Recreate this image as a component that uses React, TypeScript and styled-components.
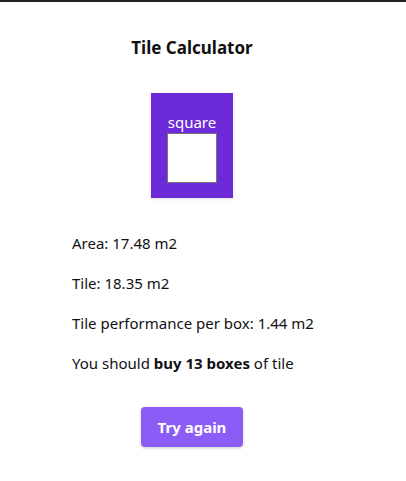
import React from "react";
import styled, { createGlobalStyle } from "styled-components";

const Global = createGlobalStyle`
  html, body { margin: 0; padding: 0; background: #fff; }
  body { font-family: "Segoe UI", "Noto Sans", "Open Sans", sans-serif; color: #111; }
`;

const Page = styled.div`
  border-top: 2px solid #222;
  min-height: 479px;
`;

const Content = styled.div`
  width: 384px;
  display: flex;
  flex-direction: column;
  align-items: center;
`;

const Title = styled.h1`
  margin: 35px 0 0;
  font-size: 17px;
  font-weight: 700;
  line-height: 22px;
`;

const Shape = styled.div`
  margin-top: 34px;
  width: 82px;
  height: 105px;
  background: #6d2ad8;
  display: flex;
  flex-direction: column;
  align-items: center;
  padding-top: 19px;
  box-sizing: border-box;
  box-shadow: 0 1px 3px rgba(0,0,0,0.12);
`;

const ShapeLabel = styled.div`
  color: #fff;
  font-size: 15px;
  line-height: 21px;
`;

const Square = styled.div`
  width: 50px;
  height: 50px;
  box-sizing: border-box;
  background: #fff;
  border: 1px solid #777;
`;

const Results = styled.div`
  align-self: stretch;
  padding: 35px 0 0 72px;
  display: flex;
  flex-direction: column;
  gap: 19px;
`;

const Line = styled.p`
  margin: 0;
  font-size: 15px;
  line-height: 21px;
`;

const Button = styled.button`
  margin-top: 33px;
  width: 102px;
  height: 40px;
  border: none;
  border-radius: 4px;
  background: #8b5cf6;
  color: #fff;
  font-family: inherit;
  font-size: 15px;
  font-weight: 700;
  box-shadow: 0 1px 3px rgba(0,0,0,0.2);
  cursor: pointer;
`;

export default function App() {
  return (
    <>
      <Global />
      <Page>
        <Content>
          <Title>Tile Calculator</Title>
          <Shape>
            <ShapeLabel>square</ShapeLabel>
            <Square />
          </Shape>
          <Results>
            <Line>Area: 17.48 m2</Line>
            <Line>Tile: 18.35 m2</Line>
            <Line>Tile performance per box: 1.44 m2</Line>
            <Line>
              You should <b>buy 13 boxes</b> of tile
            </Line>
          </Results>
          <Button>Try again</Button>
        </Content>
      </Page>
    </>
  );
}
